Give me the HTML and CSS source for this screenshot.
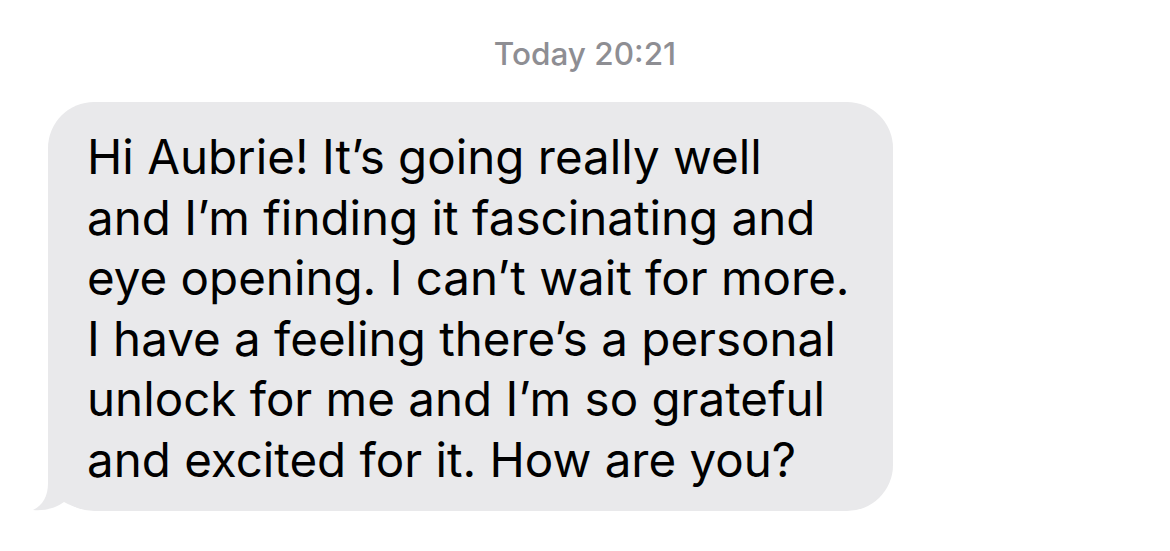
FILE: index.html
```html
<!DOCTYPE html>
<html lang="en">
<head>
	<meta charset="UTF-8">
	<title>Messages</title>
	<link rel="stylesheet" href="styles.css">
</head>
<body>
	<div class="thread">
		<div class="stamp">Today 20:21</div>
		<div class="row">
			<div class="bubble">
				<svg class="tail" width="80" height="52" viewBox="30 460 80 52">
					<path d="M48 460 L48 484 C48 497 43 506 33 511 C45 512 56 509 64 503 C74 509 87 511 100 511 L100 460 Z" fill="#e9e9eb"/>
				</svg>
				<p>
					<span>Hi Aubrie! It’s going really well</span>
					<span>and I’m finding it fascinating and</span>
					<span>eye opening. I can’t wait for more.</span>
					<span>I have a feeling there’s a personal</span>
					<span>unlock for me and I’m so grateful</span>
					<span>and excited for it. How are you?</span>
				</p>
			</div>
		</div>
	</div>
</body>
</html>
```

FILE: styles.css
```css
*{
	margin: 0;
	padding: 0;
}
body{
	background-color: #fff;
	font-family: Inter, "Liberation Sans", sans-serif;
}
.thread{
	display: flex;
	flex-direction: column;
	width: 1170px;
	height: 551px;
}
.stamp{
	padding-top: 36px;
	height: 66px;
	box-sizing: border-box;
	color: #8e8e93;
	font-size: 31.5px;
	font-weight: 500;
	line-height: 36px;
	text-align: center;
}
.row{
	display: flex;
	padding-top: 36px;
	padding-left: 48px;
}
.bubble{
	position: relative;
	width: 845px;
	height: 409px;
	box-sizing: border-box;
	padding: 25px 30px 0 39px;
	border-radius: 46px;
	background-color: #e9e9eb;
	color: #000;
}
.bubble p{
	position: relative;
	display: flex;
	flex-direction: column;
	font-size: 47.5px;
	line-height: 60.5px;
	white-space: nowrap;
}
.tail{
	position: absolute;
	left: -18px;
	bottom: 0;
}
```
